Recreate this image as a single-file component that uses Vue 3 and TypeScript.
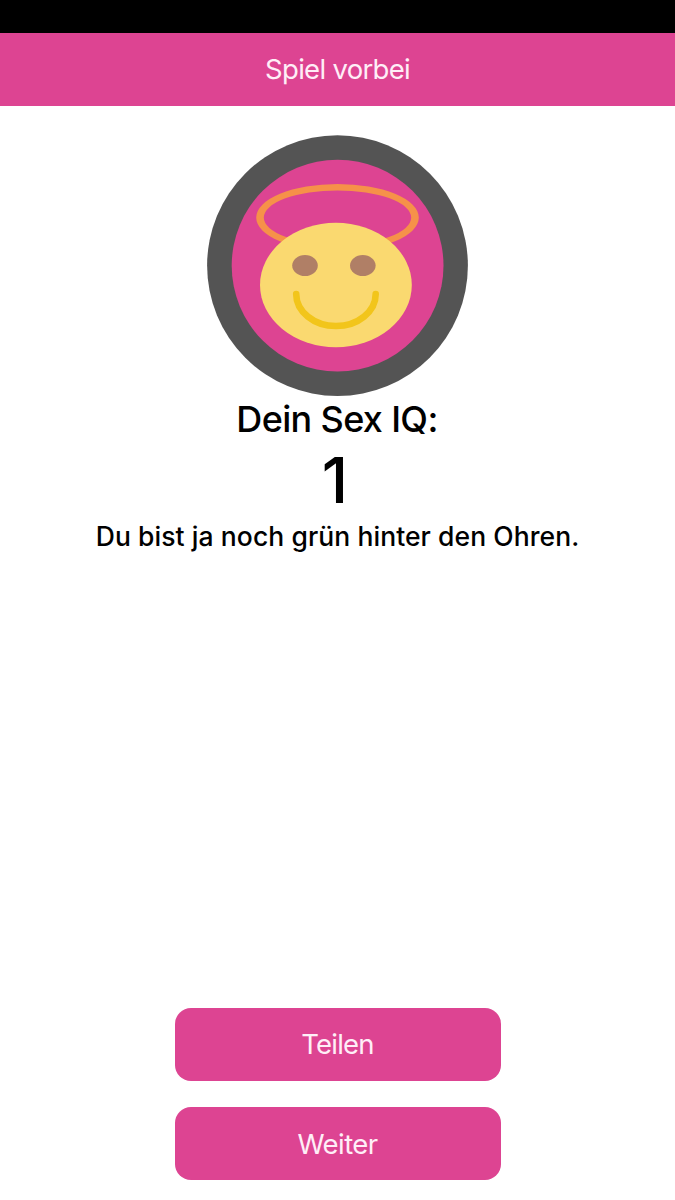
<script setup lang="ts">
import { ref } from 'vue'

const score = ref<number>(1)
const actions: { id: string; label: string }[] = [
  { id: 'share', label: 'Teilen' },
  { id: 'next', label: 'Weiter' },
]
</script>

<template>
  <div class="screen">
    <div class="status-bar"></div>
    <header class="nav"><h1 class="nav-title">Spiel vorbei</h1></header>
    <main class="content">
      <svg class="badge" viewBox="207 135 261 262" role="img">
        <circle cx="337.5" cy="265.6" r="130.4" fill="#545454" />
        <circle cx="337.6" cy="265.7" r="105.9" fill="#dd4492" />
        <path
          fill="#f69149"
          fill-rule="evenodd"
          d="M256.2 217.6a81.3 33.6 0 1 0 162.6 0a81.3 33.6 0 1 0-162.6 0ZM263.8 217.6a73.7 27.2 0 1 0 147.4 0a73.7 27.2 0 1 0-147.4 0Z"
        />
        <ellipse cx="335.9" cy="285" rx="75.9" ry="62.2" fill="#fad970" />
        <ellipse cx="305" cy="265.6" rx="12.8" ry="10.5" fill="#b07f66" />
        <ellipse cx="362.8" cy="265.6" rx="12.8" ry="10.5" fill="#b07f66" />
        <path
          d="M296.2 294C296.2 311.5 314 326 336 326S375.7 311.5 375.7 294"
          fill="none"
          stroke="#f2c51b"
          stroke-width="6.6"
          stroke-linecap="round"
        />
      </svg>
      <h2 class="title">Dein Sex IQ:</h2>
      <p class="score">{{ score }}</p>
      <p class="verdict">Du bist ja noch grün hinter den Ohren.</p>
    </main>
    <footer class="actions">
      <button v-for="action in actions" :key="action.id" type="button" class="button" :class="action.id">
        <span>{{ action.label }}</span>
      </button>
    </footer>
  </div>
</template>

<style scoped>
.screen {
  display: flex;
  flex-direction: column;
  width: 675px;
  height: 1200px;
  overflow: hidden;
  background: #fff;
  color: #000;
  font-family: Inter, 'Liberation Sans', sans-serif;
}
.status-bar {
  flex: none;
  height: 32.7px;
  background: #000;
}
.nav {
  display: flex;
  flex: none;
  align-items: center;
  justify-content: center;
  height: 73.3px;
  background: #dd4492;
  color: #ffeef7;
}
.nav-title {
  margin: 0;
  font-size: 27.5px;
  font-weight: 400;
  line-height: 34px;
  letter-spacing: -0.7px;
}
.content {
  display: flex;
  flex: 1;
  flex-direction: column;
  align-items: center;
  padding-top: 29px;
}
.badge {
  display: block;
  flex: none;
  width: 261px;
  height: 262px;
}
.title,
.score,
.verdict {
  margin: 0;
  font-weight: 500;
  white-space: nowrap;
}
.title {
  padding-right: 1px;
  font-size: 36px;
  line-height: 44px;
  letter-spacing: -0.65px;
}
.score {
  padding-right: 5px;
  font-size: 63.5px;
  line-height: 78px;
}
.verdict {
  font-size: 26.5px;
  line-height: 34px;
  letter-spacing: 0.07px;
}
.actions {
  display: flex;
  flex: none;
  flex-direction: column;
  align-items: center;
  gap: 26px;
  padding-bottom: 19.6px;
}
.button {
  display: flex;
  align-items: center;
  justify-content: center;
  width: 326px;
  height: 73.4px;
  padding: 0;
  border: 0;
  border-radius: 16px;
  background: #dd4492;
  color: #ffeef7;
  font: 400 27.5px/34px Inter, 'Liberation Sans', sans-serif;
  letter-spacing: -0.75px;
}
.next {
  letter-spacing: -0.55px;
}
</style>
